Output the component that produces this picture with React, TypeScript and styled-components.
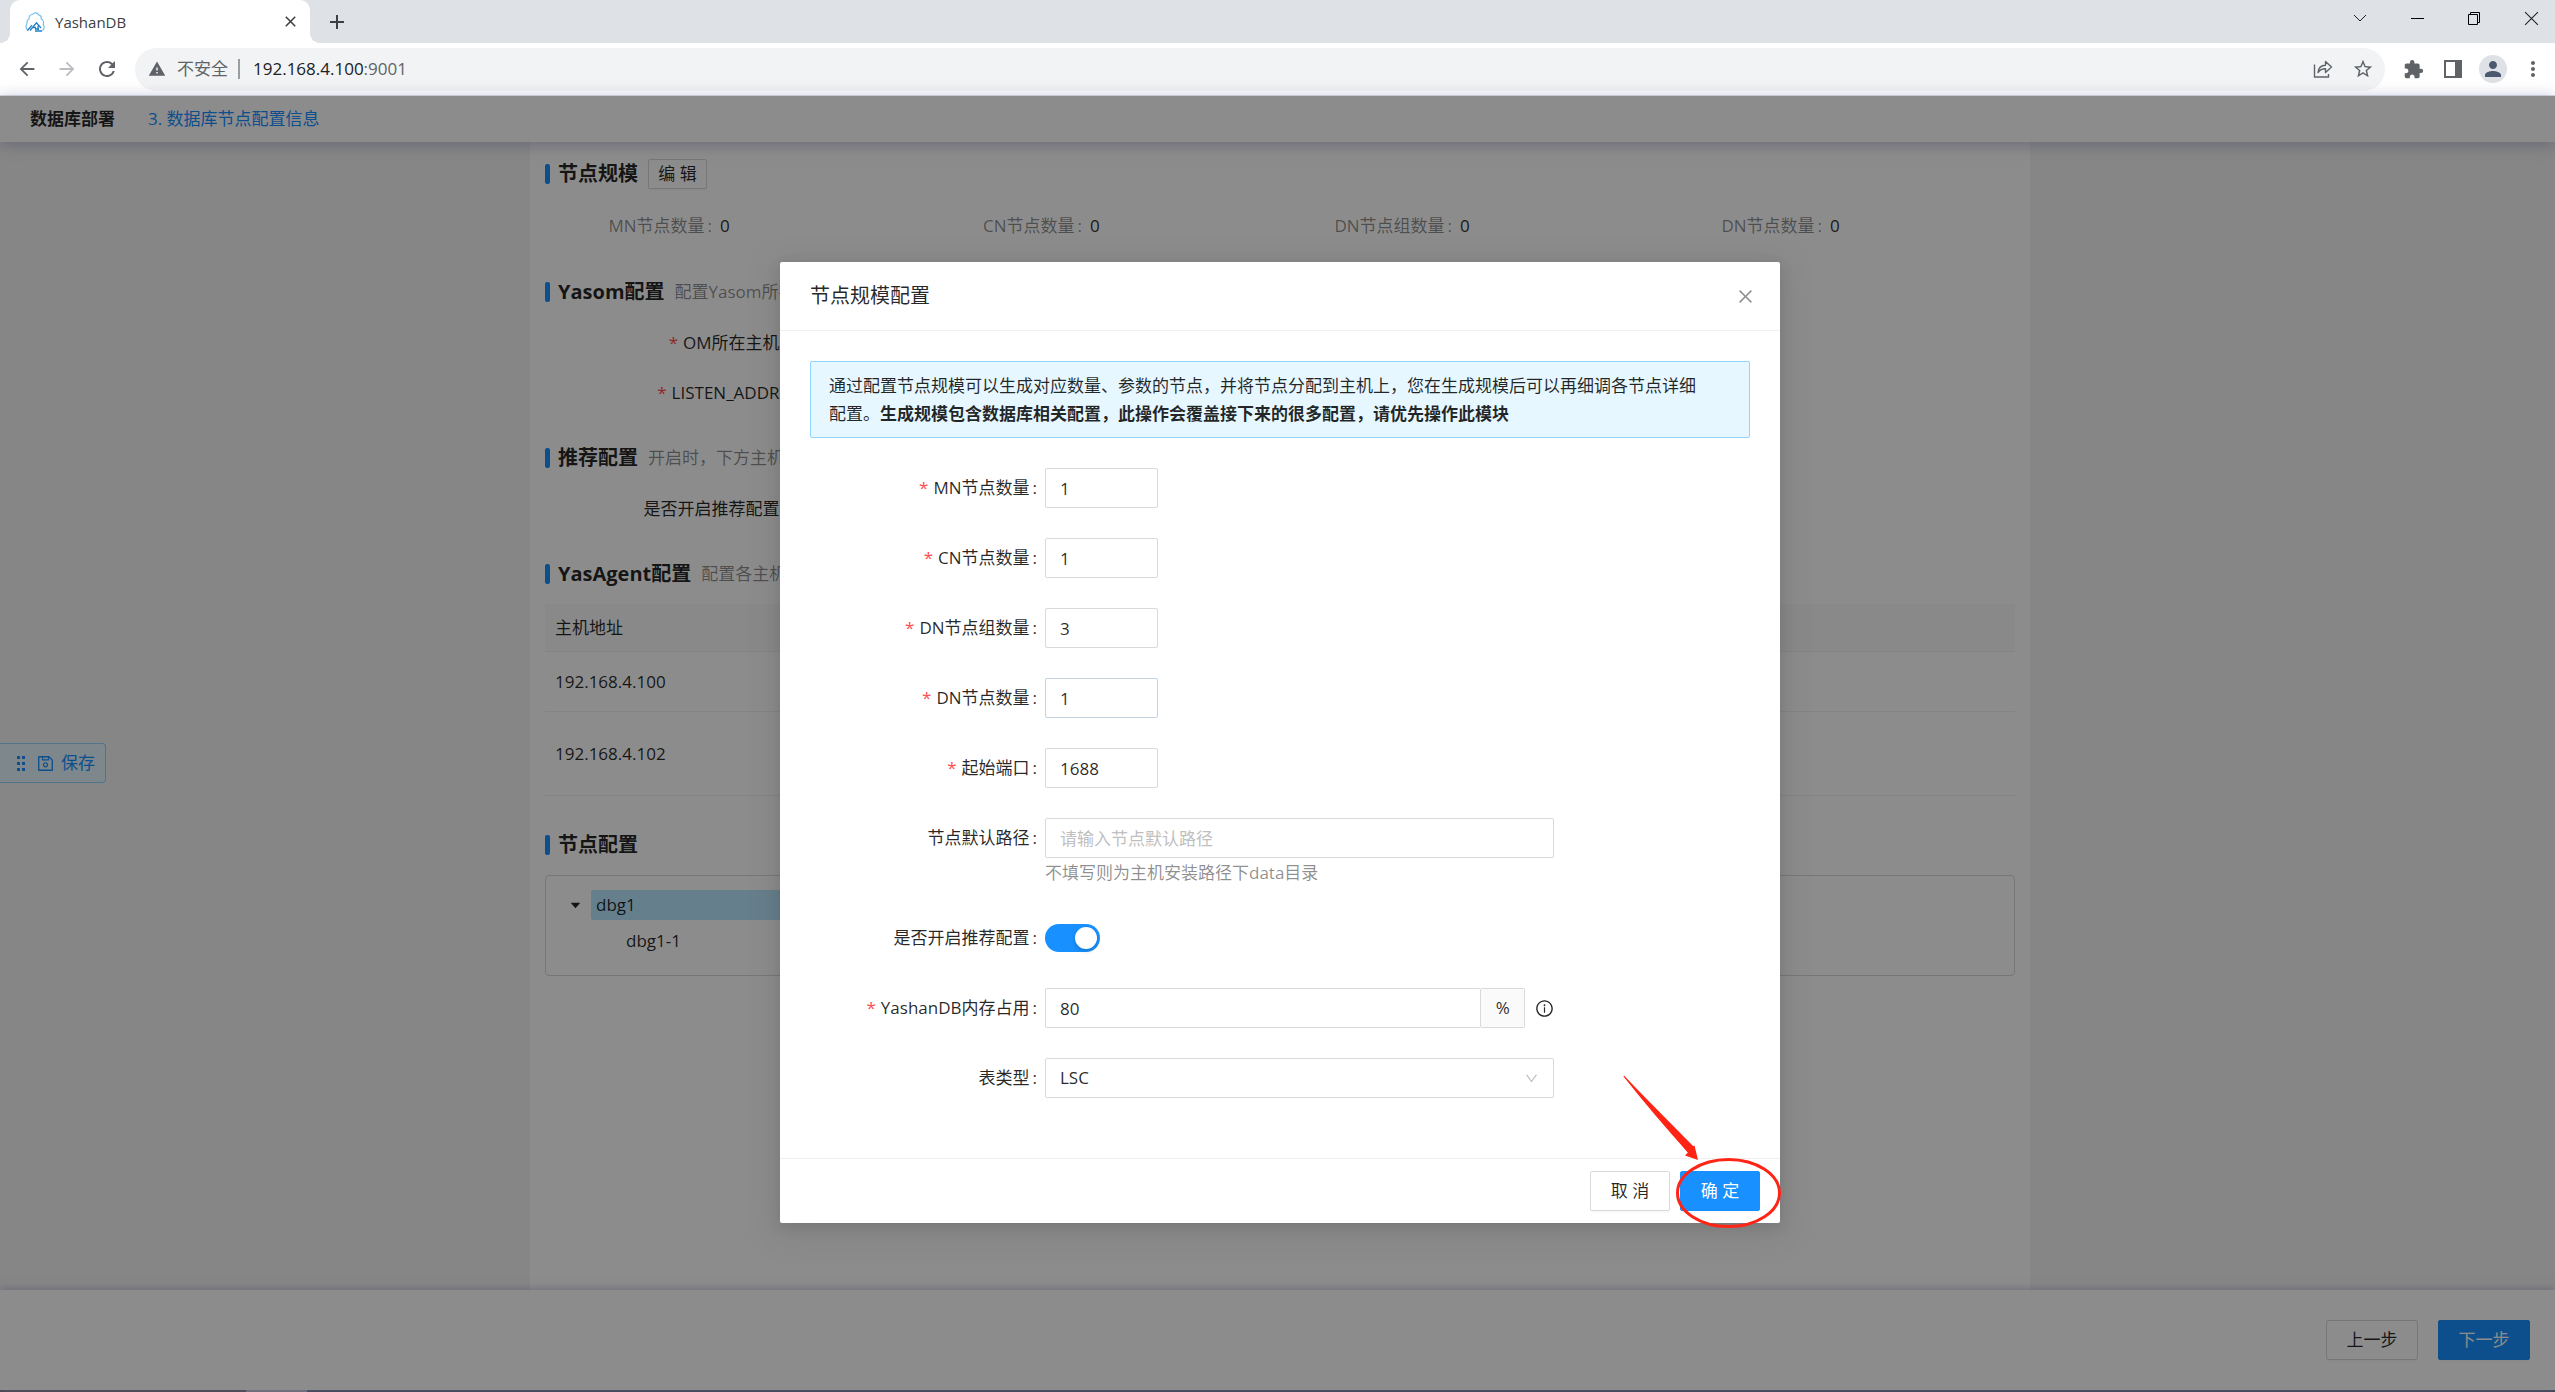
import React, { useState } from "react";
import styled, { createGlobalStyle } from "styled-components";
import {
  MdArrowBack,
  MdArrowForward,
  MdExtension,
  MdMoreVert,
  MdPerson,
  MdRefresh,
  MdStarBorder,
  MdWarning,
} from "react-icons/md";
import {
  AiFillCaretDown,
  AiOutlineClose,
  AiOutlineDown,
  AiOutlineInfoCircle,
  AiOutlineSave,
} from "react-icons/ai";

const ink = "rgba(0, 0, 0, 0.85)";
const muted = "rgba(0, 0, 0, 0.45)";
const line = "#d9d9d9";
const hairline = "#f0f0f0";
const blue = "#1890ff";
const danger = "#ff4d4f";

const GlobalStyle = createGlobalStyle`
  *, *::before, *::after { box-sizing: border-box; }
  body {
    margin: 0;
    color: ${ink};
    font-family: "Open Sans", "Noto Sans CJK SC", sans-serif;
    font-size: 17px;
    font-weight: 400;
    line-height: 28px;
  }
  button, input, select { font: inherit; color: inherit; }
  button { cursor: pointer; }
  h1, h2, p, dl, dd, ul { margin: 0; padding: 0; }
  ul { list-style: none; }
`;

const Screen = styled.div`
  display: flex;
  flex-direction: column;
  min-height: 100vh;
  overflow: hidden;
`;

/* Browser window */

const TabStrip = styled.div`
  display: flex;
  align-items: center;
  height: 43px;
  padding: 0 14px 0 10px;
  background: #dee1e6;
`;

const Tab = styled.div`
  position: relative;
  display: flex;
  align-items: center;
  gap: 10px;
  width: 300px;
  height: 43px;
  padding: 0 12px 0 15px;
  border-radius: 10px 10px 0 0;
  background: #fff;
  color: #3c4043;
  font-size: 15px;

  &::before,
  &::after {
    content: "";
    position: absolute;
    bottom: 0;
    width: 10px;
    height: 10px;
  }
  &::before {
    right: 100%;
    background: radial-gradient(circle at 0 0, #dee1e6 10px, #fff 10px);
  }
  &::after {
    left: 100%;
    background: radial-gradient(circle at 100% 0, #dee1e6 10px, #fff 10px);
  }
`;

const TabTitle = styled.span`
  flex: 1;
`;

const ChromeButton = styled.button<{ $size?: number; $tone?: string }>`
  display: grid;
  place-items: center;
  flex: none;
  width: ${(p) => p.$size ?? 40}px;
  height: ${(p) => p.$size ?? 40}px;
  padding: 0;
  border: 0;
  background: none;
  color: ${(p) => p.$tone ?? "#5f6368"};
`;

const NewTab = styled.div`
  flex: 1;
  padding-left: 12px;
`;

const WindowControls = styled.div`
  display: flex;
  gap: 37px;
  padding-bottom: 7px;
`;

const Toolbar = styled.div`
  display: flex;
  align-items: center;
  height: 53px;
  padding: 0 2px 0 7px;
  border-bottom: 1px solid #d5d7da;
  background: #fff;
`;

const AddressBar = styled.div`
  display: flex;
  align-items: center;
  flex: 1;
  height: 43px;
  margin: 0 8px;
  padding: 0 2px 0 13px;
  border-radius: 22px;
  background: #f1f3f4;
  color: #5f6368;
`;

const Security = styled.span`
  margin: 0 10px 0 11px;
  padding-right: 10px;
  border-right: 2px solid #9a9da1;
  line-height: 20px;
`;

const Address = styled.span`
  flex: 1;
  padding-left: 3px;
`;

const Host = styled.span`
  color: #202124;
`;

const Avatar = styled.span`
  display: grid;
  place-items: center;
  width: 28px;
  height: 28px;
  border-radius: 50%;
  background: #dee1e6;
  color: #4c5870;
`;

const Taskbar = styled.div`
  height: 2px;
  background: linear-gradient(90deg, #46404c 0 246px, #6b6a70 246px 307px, #3e4150 307px);
`;

/* Page */

const Page = styled.div`
  position: relative;
  display: flex;
  flex-direction: column;
  flex: 1;
  background: #f4f4f4;
`;

const PageHeader = styled.header`
  z-index: 1;
  display: flex;
  align-items: center;
  gap: 33px;
  height: 46px;
  padding: 0 30px;
  background: #fff;
  box-shadow: 0 2px 16px rgba(140, 145, 190, 0.6);
`;

const PageTitle = styled.h1`
  font-size: 17px;
  font-weight: 700;
`;

const StepName = styled.span`
  color: ${blue};
`;

const Main = styled.main`
  display: flex;
  justify-content: center;
  flex: 1;
  padding-left: 5px;
`;

const Panel = styled.div`
  display: flex;
  flex-direction: column;
  gap: 34px;
  width: 1500px;
  padding: 17px 15px;
  background: #fff;
`;

const Section = styled.section<{ $gap?: number }>`
  display: flex;
  flex-direction: column;
  gap: ${(p) => p.$gap ?? 20}px;
`;

const SectionHead = styled.div`
  display: flex;
  align-items: center;
  gap: 10px;
  height: 30px;
`;

const SectionTitle = styled.h2`
  display: flex;
  align-items: center;
  gap: 8px;
  font-size: 20px;
  font-weight: 700;

  &::before {
    content: "";
    width: 5px;
    height: 20px;
    border-radius: 2px;
    background: ${blue};
  }
`;

const Hint = styled.span`
  color: ${muted};
`;

const Button = styled.button<{ $primary?: boolean; $small?: boolean; $width?: number }>`
  height: ${(p) => (p.$small ? 30 : 40)}px;
  width: ${(p) => p.$width ?? 80}px;
  padding: 0;
  border: 1px solid ${(p) => (p.$primary ? blue : line)};
  border-radius: 2px;
  background: ${(p) => (p.$primary ? blue : "#fff")};
  color: ${(p) => (p.$primary ? "#fff" : ink)};
  box-shadow: 0 2px 0 rgba(0, 0, 0, 0.02);
  line-height: 26px;
  white-space: pre;
`;

const Stats = styled.dl`
  display: grid;
  grid-template-columns: repeat(4, 1fr);
  margin: 0 -5px;
`;

const Stat = styled.div`
  display: grid;
  grid-template-columns: 180px 1fr;
  align-items: center;
  height: 34px;
`;

const StatName = styled.dt`
  color: ${muted};
  text-align: right;
`;

const Colon = styled.span`
  margin: 0 8px 0 3px;
`;

const Settings = styled.div`
  display: grid;
  gap: 18px;
`;

const Setting = styled.div`
  width: 250px;
  height: 32px;
  line-height: 32px;
  text-align: right;
`;

const Star = styled.span`
  margin-right: 5px;
  color: ${danger};
`;

const HostTable = styled.table`
  width: 100%;
  border-collapse: separate;
  border-spacing: 0;
`;

const HeadCell = styled.th`
  height: 48px;
  padding: 0 10px;
  border-bottom: 1px solid ${hairline};
  border-radius: 2px 2px 0 0;
  background: #fafafa;
  font-weight: inherit;
  text-align: left;
`;

const HostCell = styled.td<{ $height: number }>`
  height: ${(p) => p.$height}px;
  padding: 0 10px;
  border-bottom: 1px solid ${hairline};
`;

const Tree = styled.ul`
  display: grid;
  grid-template-columns: 400px;
  gap: 6px;
  padding: 14px 20px 19px;
  border: 1px solid ${line};
  border-radius: 4px;
`;

const TreeRow = styled.li<{ $depth?: number }>`
  display: flex;
  align-items: center;
  gap: 7px;
  padding-left: ${(p) => (p.$depth ?? 0) * 30}px;
`;

const Caret = styled.span`
  display: grid;
  place-items: center;
  width: 18px;
`;

const TreeNode = styled.button<{ $selected?: boolean }>`
  flex: 1;
  height: 30px;
  padding: 0 5px;
  border: 0;
  border-radius: 2px;
  background: ${(p) => (p.$selected ? "#bae7ff" : "none")};
  line-height: 28px;
  text-align: left;
`;

const PageFooter = styled.footer`
  z-index: 1;
  display: flex;
  align-items: center;
  justify-content: flex-end;
  gap: 20px;
  height: 100px;
  padding: 0 25px;
  background: #fff;
  box-shadow: 0 -1px 8px rgba(140, 145, 190, 0.5);
`;

const SaveDock = styled.button`
  position: absolute;
  left: 0;
  top: 50%;
  display: flex;
  align-items: center;
  height: 40px;
  padding: 0 10px 0 16px;
  border: 1px solid #91d5ff;
  border-left: 0;
  border-radius: 0 4px 4px 0;
  background: #e6f7ff;
  color: ${blue};

  svg + svg {
    margin: 0 6px 0 10px;
  }
`;

/* Dialog */

const Mask = styled.div`
  position: absolute;
  inset: 0;
  z-index: 2;
  display: grid;
  place-items: center;
  padding: 0 0 1px 5px;
  background: rgba(0, 0, 0, 0.45);
`;

const Dialog = styled.div`
  position: relative;
  width: 1000px;
  border-radius: 2px;
  background: #fff;
  box-shadow: 0 4px 15px rgba(0, 0, 0, 0.12), 0 8px 35px 10px rgba(0, 0, 0, 0.05);
`;

const DialogHead = styled.div`
  display: flex;
  align-items: center;
  justify-content: space-between;
  padding: 20px 25px 20px 30px;
  border-bottom: 1px solid ${hairline};
`;

const DialogTitle = styled.h2`
  font-size: 20px;
  font-weight: 400;
`;

const CloseButton = styled.button`
  display: grid;
  place-items: center;
  width: 20px;
  height: 20px;
  padding: 0;
  border: 0;
  background: none;
  color: ${muted};
`;

const DialogBody = styled.div`
  display: grid;
  gap: 30px;
  padding: 30px 30px 60px;
`;

const Notice = styled.div`
  padding: 10px 18px 9px;
  border: 1px solid #91d5ff;
  border-radius: 2px;
  background: #e6f7ff;
`;

const NoticeText = styled.p`
  max-width: 51em;
`;

const Strong = styled.strong`
  font-weight: 700;
`;

const Field = styled.div`
  display: grid;
  grid-template-columns: 6fr 13fr 5fr;
`;

const FieldLabel = styled.label`
  line-height: 40px;
  text-align: right;
`;

const FieldControl = styled.div`
  display: flex;
  align-items: center;
  flex-wrap: wrap;
  min-height: 40px;
`;

const TextInput = styled.input<{ $short?: boolean; $active?: boolean }>`
  width: ${(p) => (p.$short ? "113px" : "100%")};
  height: 40px;
  padding: 0 14px;
  border: 1px solid ${(p) => (p.$active ? "#c3d3e2" : line)};
  border-radius: 2px;
  background: #fff;
  outline: none;

  &::placeholder {
    color: #bfbfbf;
    opacity: 1;
  }
`;

const Help = styled.span`
  height: 30px;
  color: ${muted};
  line-height: 30px;
`;

const Switch = styled.input`
  appearance: none;
  width: 55px;
  height: 28px;
  margin: 0;
  padding: 3px;
  border-radius: 14px;
  background: ${muted};
  cursor: pointer;

  &::before {
    content: "";
    display: block;
    width: 22px;
    height: 22px;
    border-radius: 50%;
    background: #fff;
    box-shadow: 0 2px 4px rgba(0, 35, 11, 0.2);
  }
  &:checked {
    background: ${blue};
  }
  &:checked::before {
    margin-left: auto;
  }
`;

const AddonGroup = styled.div`
  display: flex;
  flex: 1;
  margin-right: 10px;
`;

const Addon = styled.span`
  width: 44px;
  flex: none;
  border: 1px solid ${line};
  border-left: 0;
  border-radius: 0 2px 2px 0;
  background: #fafafa;
  line-height: 38px;
  text-align: center;
`;

const SelectBox = styled.div`
  display: grid;
  grid-template-columns: 1fr 16px 14px;
  align-items: center;
  width: 100%;
  height: 40px;
  color: #bfbfbf;

  select {
    grid-area: 1 / 1 / 2 / 4;
    height: 40px;
    padding: 0 14px;
    appearance: none;
    border: 1px solid ${line};
    border-radius: 2px;
    background: #fff;
    color: ${ink};
  }
  svg {
    grid-area: 1 / 2;
    pointer-events: none;
  }
`;

const DialogFoot = styled.div`
  display: flex;
  justify-content: flex-end;
  gap: 10px;
  padding: 12px 20px;
  border-top: 1px solid ${hairline};
`;

const Callout = styled.svg`
  position: absolute;
  right: -10px;
  bottom: -10px;
  pointer-events: none;
`;

function Logo() {
  return (
    <svg width="20" height="20" viewBox="0 0 20 20" fill="none">
      <path
        d="M3 18.5C1 16.5.6 13.5 2 11.5 1.600 9 2.800 7.500 4 7 4 4 5.500 2.500 7.500 2.500 9 .3 12.500.3 13.500 2.800 15.500 3.200 16.600 5 16.200 7 18.300 8 19 10.500 18.200 12.500 19.500 14.500 19 17 17.500 18.500"
        stroke="#74c0ee"
        strokeWidth="1.200"
      />
      <path d="M2.500 18.500 7 13.200M5 18.500 11.500 10.800 16 16M8 15.500h3M10 17h4M10 19h7M13 14v4" stroke="#1f7fc9" strokeWidth="1.300" />
    </svg>
  );
}

function Cross({ size, width }: { size: number; width: number }) {
  return (
    <svg width={size} height={size} viewBox="0 0 14 14" fill="none" stroke="currentColor" strokeWidth={width}>
      <path d="M1 1 13 13M13 1 1 13" />
    </svg>
  );
}

function BrowserChrome() {
  return (
    <>
      <TabStrip>
        <Tab>
          <Logo />
          <TabTitle>YashanDB</TabTitle>
          <ChromeButton $size={16} aria-label="关闭标签页" $tone="#3c4043">
            <Cross size={11} width={2} />
          </ChromeButton>
        </Tab>
        <NewTab>
          <ChromeButton $size={30} aria-label="新标签页" $tone="#3c4043">
            <svg width="16" height="16" viewBox="0 0 16 16" stroke="currentColor" strokeWidth="2">
              <path d="M8 1v14M1 8h14" />
            </svg>
          </ChromeButton>
        </NewTab>
        <WindowControls>
          <ChromeButton $size={20} $tone="#202124" aria-label="搜索标签页">
            <svg width="14" height="14" viewBox="0 0 14 14" fill="none" stroke="currentColor">
              <path d="M1 4 7 10 13 4" />
            </svg>
          </ChromeButton>
          <ChromeButton $size={20} $tone="#000" aria-label="最小化">
            <svg width="14" height="14" viewBox="0 0 14 14" fill="none" stroke="currentColor">
              <path d="M1 7.500h13" />
            </svg>
          </ChromeButton>
          <ChromeButton $size={20} $tone="#000" aria-label="还原">
            <svg width="14" height="14" viewBox="0 0 14 14" fill="none" stroke="currentColor">
              <path d="M1.500 3.500h9v10h-9zM3.500 3V1.500h9v10H11" />
            </svg>
          </ChromeButton>
          <ChromeButton $size={20} $tone="#202124" aria-label="关闭">
            <Cross size={15} width={1} />
          </ChromeButton>
        </WindowControls>
      </TabStrip>
      <Toolbar>
        <ChromeButton aria-label="后退"><MdArrowBack size={22} /></ChromeButton>
        <ChromeButton aria-label="前进" $tone="#bbbdc0"><MdArrowForward size={22} /></ChromeButton>
        <ChromeButton aria-label="重新加载"><MdRefresh size={24} /></ChromeButton>
        <AddressBar>
          <MdWarning size={18} />
          <Security>不安全</Security>
          <Address><Host>192.168.4.100</Host>:9001</Address>
          <ChromeButton aria-label="分享">
            <svg width="20" height="20" viewBox="0 0 20 20" fill="none" stroke="currentColor" strokeWidth="1.400">
              <path d="M1.500 5.500v12.500h14v-3" />
              <path d="M5 13.500C5.500 9 8 6.500 12.500 6.300V2.500L18.500 8l-6 5.500V9.800C9 9.800 6.800 11 5 13.500Z" strokeLinejoin="round" />
            </svg>
          </ChromeButton>
          <ChromeButton aria-label="收藏"><MdStarBorder size={22} /></ChromeButton>
        </AddressBar>
        <ChromeButton aria-label="扩展程序"><MdExtension size={21} /></ChromeButton>
        <ChromeButton aria-label="侧边栏">
          <svg width="18" height="18" viewBox="0 0 18 18" fill="none">
            <path d="M1 1h16v16H1z" stroke="currentColor" strokeWidth="2" />
            <path d="M11 1h6v16h-6z" fill="currentColor" />
          </svg>
        </ChromeButton>
        <ChromeButton aria-label="用户"><Avatar><MdPerson size={24} /></Avatar></ChromeButton>
        <ChromeButton aria-label="更多"><MdMoreVert size={24} /></ChromeButton>
      </Toolbar>
    </>
  );
}

function Heading({ title, hint, children }: { title: string; hint?: string; children?: React.ReactNode }) {
  return (
    <SectionHead>
      <SectionTitle>{title}</SectionTitle>
      {hint && <Hint>{hint}</Hint>}
      {children}
    </SectionHead>
  );
}

function SettingRow({ label, required }: { label: string; required?: boolean }) {
  return (
    <Setting>
      {required && <Star>*</Star>}
      {label}
      <Colon>:</Colon>
    </Setting>
  );
}

type FormRowProps = { id: string; label: string; required?: boolean; children: React.ReactNode };

function FormRow({ id, label, required, children }: FormRowProps) {
  return (
    <Field>
      <FieldLabel htmlFor={id}>
        {required && <Star>*</Star>}
        {label}
        <Colon>:</Colon>
      </FieldLabel>
      <FieldControl>{children}</FieldControl>
    </Field>
  );
}

const stats = ["MN节点数量", "CN节点数量", "DN节点组数量", "DN节点数量"];

const counts = [
  { id: "mn", label: "MN节点数量", value: "1" },
  { id: "cn", label: "CN节点数量", value: "1" },
  { id: "dn-groups", label: "DN节点组数量", value: "3" },
  { id: "dn", label: "DN节点数量", value: "1", active: true },
  { id: "port", label: "起始端口", value: "1688" },
];

function ScaleDialog() {
  const [recommended, setRecommended] = useState(true);
  return (
    <Mask>
      <Dialog role="dialog" aria-labelledby="scale-title">
        <DialogHead>
          <DialogTitle id="scale-title">节点规模配置</DialogTitle>
          <CloseButton aria-label="关闭"><AiOutlineClose size={19} /></CloseButton>
        </DialogHead>
        <DialogBody>
          <Notice>
            <NoticeText>
              通过配置节点规模可以生成对应数量、参数的节点，并将节点分配到主机上，您在生成规模后可以再细调各节点详细配置。
              <Strong>生成规模包含数据库相关配置，此操作会覆盖接下来的很多配置，请优先操作此模块</Strong>
            </NoticeText>
          </Notice>
          {counts.map((c) => (
            <FormRow key={c.id} id={c.id} label={c.label} required>
              <TextInput id={c.id} defaultValue={c.value} $short $active={c.active} />
            </FormRow>
          ))}
          <FormRow id="path" label="节点默认路径">
            <TextInput id="path" placeholder="请输入节点默认路径" />
            <Help>不填写则为主机安装路径下data目录</Help>
          </FormRow>
          <FormRow id="recommended" label="是否开启推荐配置">
            <Switch
              id="recommended"
              type="checkbox"
              role="switch"
              checked={recommended}
              onChange={(e) => setRecommended(e.target.checked)}
            />
          </FormRow>
          <FormRow id="memory" label="YashanDB内存占用" required>
            <AddonGroup>
              <TextInput id="memory" defaultValue="80" />
              <Addon>%</Addon>
            </AddonGroup>
            <AiOutlineInfoCircle size={19} />
          </FormRow>
          <FormRow id="table-type" label="表类型">
            <SelectBox>
              <select id="table-type" defaultValue="LSC">
                <option>LSC</option>
              </select>
              <AiOutlineDown size={15} />
            </SelectBox>
          </FormRow>
        </DialogBody>
        <DialogFoot>
          <Button>取 消</Button>
          <Button $primary>确 定</Button>
        </DialogFoot>
        <Callout width="170" height="163" viewBox="0 0 170 163">
          <path d="M4 5.500Q40 44 70 78L74.500 75.500 78 90 65 85.500 68 82.500Q34 45 3.500 6.500Z" fill="#ff2414" />
          <path d="M4 6 69 84 75 78Z" fill="#ff2414" />
          <ellipse cx="108.500" cy="123" rx="51" ry="33.500" fill="none" stroke="#ff2414" strokeWidth="3" />
        </Callout>
      </Dialog>
    </Mask>
  );
}

export default function App() {
  return (
    <Screen>
      <GlobalStyle />
      <BrowserChrome />
      <Page>
        <PageHeader>
          <PageTitle>数据库部署</PageTitle>
          <StepName>3. 数据库节点配置信息</StepName>
        </PageHeader>
        <Main>
          <Panel>
            <Section>
              <Heading title="节点规模">
                <Button $small $width={59}>编 辑</Button>
              </Heading>
              <Stats>
                {stats.map((name) => (
                  <Stat key={name}>
                    <StatName>{name}<Colon>:</Colon></StatName>
                    <dd>0</dd>
                  </Stat>
                ))}
              </Stats>
            </Section>
            <Section>
              <Heading title="Yasom配置" hint="配置Yasom所在主机" />
              <Settings>
                <SettingRow label="OM所在主机" required />
                <SettingRow label="LISTEN_ADDR" required />
              </Settings>
            </Section>
            <Section>
              <Heading title="推荐配置" hint="开启时，下方主机" />
              <SettingRow label="是否开启推荐配置" />
            </Section>
            <Section $gap={15}>
              <Heading title="YasAgent配置" hint="配置各主机" />
              <HostTable>
                <thead>
                  <tr><HeadCell>主机地址</HeadCell></tr>
                </thead>
                <tbody>
                  <tr><HostCell $height={60}>192.168.4.100</HostCell></tr>
                  <tr><HostCell $height={84}>192.168.4.102</HostCell></tr>
                </tbody>
              </HostTable>
            </Section>
            <Section $gap={15}>
              <Heading title="节点配置" />
              <Tree>
                <TreeRow>
                  <Caret><AiFillCaretDown size={13} /></Caret>
                  <TreeNode $selected>dbg1</TreeNode>
                </TreeRow>
                <TreeRow $depth={1}>
                  <Caret />
                  <TreeNode>dbg1-1</TreeNode>
                </TreeRow>
              </Tree>
            </Section>
          </Panel>
        </Main>
        <PageFooter>
          <Button $width={92}>上一步</Button>
          <Button $primary $width={92}>下一步</Button>
        </PageFooter>
        <SaveDock>
          <svg width="10" height="16" viewBox="0 0 10 16" fill="currentColor">
            {[2, 8, 14].map((y) => (
              <path key={y} d={`M1 ${y - 1}h3v3h-3zM6 ${y - 1}h3v3h-3z`} />
            ))}
          </svg>
          <AiOutlineSave size={19} />
          保存
        </SaveDock>
        <ScaleDialog />
      </Page>
      <Taskbar />
    </Screen>
  );
}
